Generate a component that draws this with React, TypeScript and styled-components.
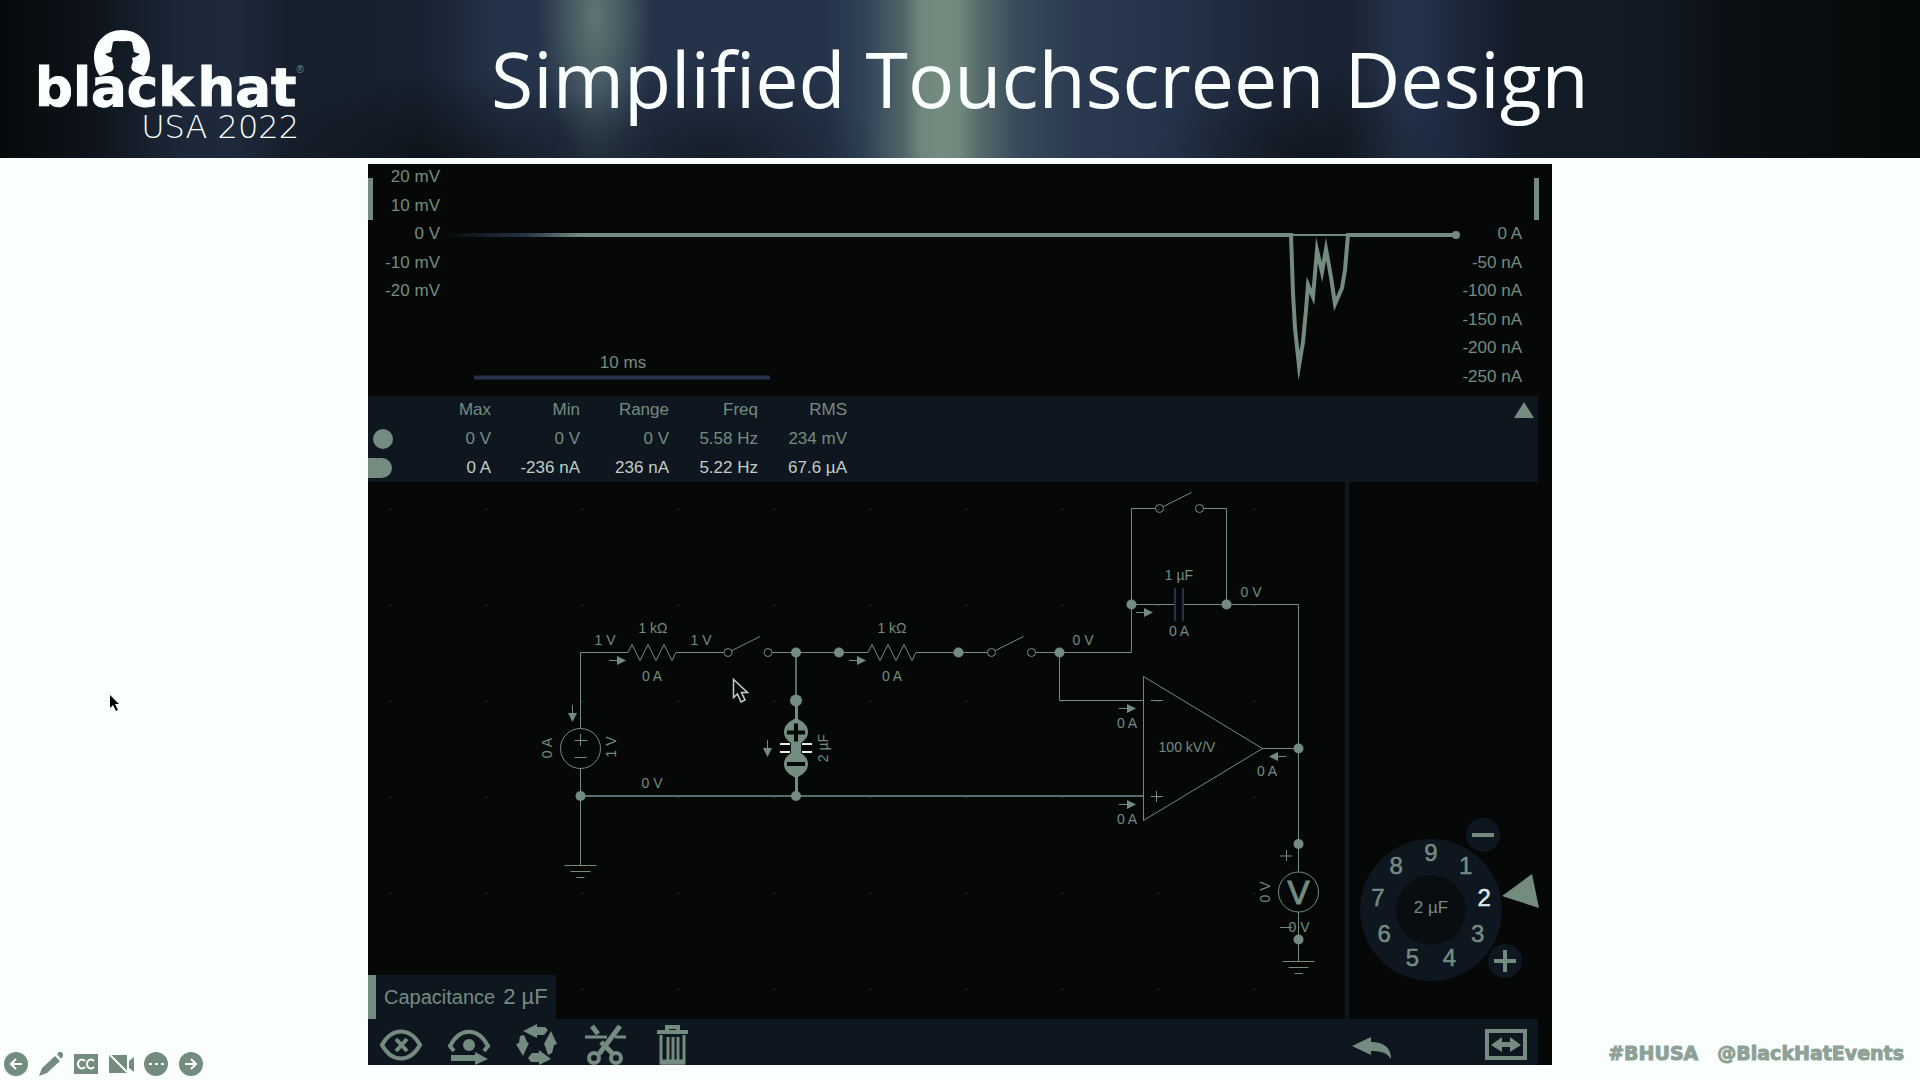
import React from "react";
import styled, { createGlobalStyle } from "styled-components";

const color = {
  paper: "#fafffd",
  ink: "#050807",
  band: "#0e161f",
  navy: "#25334a",
  sage: "#748c80",
  bright: "#c0cec6",
};

const Global = createGlobalStyle`
  *, *::before, *::after { box-sizing: border-box; }
  body { margin: 0; background: ${color.paper}; font-family: "Liberation Sans", Arial, sans-serif; }
  button { border: 0; padding: 0; background: none; color: inherit; font: inherit; cursor: pointer; }
  svg { display: block; }
`;

const Slide = styled.div`
  position: relative;
  min-height: 100vh;
  display: flex;
  flex-direction: column;
  overflow: hidden;
`;

const Header = styled.header`
  display: flex;
  align-items: flex-start;
  gap: 188px;
  height: 158px;
  padding: 30px 35px 0;
  color: ${color.paper};
  background:
    radial-gradient(ellipse 9% 60% at 37% 100%, rgba(5, 8, 7, 0.5), transparent),
    radial-gradient(ellipse 10% 60% at 24% 105%, rgba(5, 8, 7, 0.6), transparent),
    radial-gradient(ellipse 8% 55% at 68% 100%, rgba(5, 8, 7, 0.45), transparent),
    radial-gradient(ellipse 3% 90% at 31% 10%, rgba(116, 140, 128, 0.7), transparent),
    linear-gradient(90deg,
      #070a0b 0%, #0e141c 5%, #1b2636 9%, #1e2a3c 12%, #161f2c 15%, #172130 22%,
      #25334a 26%, #25334a 29%, #2f4054 31%, #25334a 34%, #25334a 43%, #314257 45%,
      #4f6468 47%, #6f877c 48%, #748c80 49%, #6f877c 50%, #566b6c 51%, #384a5b 53%, #2b3a50 56%, #25334a 61%,
      #1c2739 66%, #182231 70%, #25334a 73%, #22304a 74%, #131b27 79%, #121a25 86%,
      #0b1015 90%, #060908 100%);
`;

const Logo = styled.div`
  flex: none;
  display: flex;
  flex-direction: column;
  width: 268px;
`;

const HatIcon = styled.svg`
  width: 56px;
  height: 46px;
  margin-left: 59px;
`;

const LogoName = styled.div`
  display: flex;
  gap: 4px;
  margin-top: -12px;
  font: 700 53px/48px "DejaVu Sans", sans-serif;
  -webkit-text-stroke: 1px currentColor;
  white-space: nowrap;
`;

const LogoYear = styled.div`
  align-self: flex-end;
  padding-right: 4px;
  font: 200 32px/30px "DejaVu Sans", sans-serif;
  white-space: nowrap;
`;

const Registered = styled.sup`
  width: 0;
  margin-left: -4px;
  font: 400 10px/12px "Liberation Sans", sans-serif;
  -webkit-text-stroke: 0;
  color: ${color.sage};
`;

const Title = styled.h1`
  margin: 0;
  font: 400 77px/98px "Open Sans", sans-serif;
  white-space: nowrap;
`;

const Body = styled.main`
  flex: 1;
  display: grid;
  grid-template-columns: minmax(0, 1fr) minmax(0, 1184px) minmax(0, 1fr);
  padding-top: 6px;
`;

const Side = styled.aside<{ $end?: boolean }>`
  display: flex;
  align-items: flex-end;
  justify-content: ${(p) => (p.$end ? "flex-end" : "flex-start")};
  padding: ${(p) => (p.$end ? "0 16px 15px 0" : "0 0 4px 4px")};
`;

const SlideNav = styled.nav`
  display: flex;
  gap: 11px;
  color: ${color.sage};
  button { width: 24px; height: 24px; }
`;

const Tags = styled.div`
  display: flex;
  gap: 19px;
  font: 700 19px/24px "DejaVu Sans", sans-serif;
  -webkit-text-stroke: 1px currentColor;
  white-space: nowrap;
  a { color: #8da197; text-decoration: none; }
`;

const Panel = styled.section`
  align-self: start;
  background: ${color.ink};
  color: ${color.sage};
`;

const Scope = styled.div`
  display: flex;
  height: 232px;
  padding-right: 13px;
`;

const Marker = styled.span`
  flex: none;
  width: 5px;
  height: 42px;
  margin-top: 14px;
  background: ${color.sage};
`;

const Axis = styled.ul<{ $right?: boolean }>`
  flex: none;
  display: flex;
  flex-direction: column;
  justify-content: space-between;
  width: ${(p) => (p.$right ? "74px" : "67px")};
  height: ${(p) => (p.$right ? "163px" : "134px")};
  margin: ${(p) => (p.$right ? "60px 12px 0 0" : "3px 0 0")};
  padding: 0;
  list-style: none;
  font-size: 17px;
  line-height: 20px;
  text-align: right;
  white-space: nowrap;
`;

const Plot = styled.svg`
  flex: 1;
  min-width: 0;
  height: 232px;
`;

const Measures = styled.div`
  display: flex;
  justify-content: space-between;
  align-items: flex-start;
  margin-right: 14px;
  padding-right: 4px;
  background: ${color.band};
`;

const Table = styled.table`
  border-collapse: collapse;
  table-layout: fixed;
  width: 479px;
  font-size: 17px;
  line-height: 20px;

  th, td { width: 89px; padding: 0; font-weight: 400; text-align: right; white-space: nowrap; }
  th:first-child { width: 34px; }
  thead tr { height: 28px; }
  tbody tr { height: 29px; }
`;

const Row = styled.tr<{ $active?: boolean }>`
  color: ${(p) => (p.$active ? color.bright : color.sage)};
`;

const Swatch = styled.span<{ $pill?: boolean }>`
  display: block;
  width: ${(p) => (p.$pill ? "24px" : "20px")};
  height: 20px;
  margin-left: ${(p) => (p.$pill ? "0" : "5px")};
  border-radius: ${(p) => (p.$pill ? "0 10px 10px 0" : "10px")};
  background: ${color.sage};
`;

const Collapse = styled.button`
  width: 20px;
  height: 26px;
  padding: 6px 0 4px;
`;

const Workspace = styled.div`
  display: grid;
  grid-template-columns: minmax(0, 977px) minmax(0, 207px);
`;

const Canvas = styled.div`
  position: relative;
`;

const Diagram = styled.svg`
  width: 100%;
  height: auto;
  font-size: 14px;
`;

const Property = styled.div`
  position: absolute;
  left: 0;
  bottom: 0;
  display: flex;
  align-items: center;
  gap: 8px;
  height: 44px;
  padding: 0 8px;
  border-left: 8px solid ${color.sage};
  background: ${color.band};
  font-size: 20px;
  white-space: nowrap;
  output { font-size: 22px; }
`;

const DialColumn = styled.div`
  display: flex;
  justify-content: flex-end;
  align-items: flex-end;
  padding: 0 13px 37px 0;
  border-left: 4px solid ${color.band};
`;

const Dial = styled.div`
  position: relative;
  flex: none;
  width: 180px;
  height: 164px;
`;

const DialDigit = styled.button<{ $active?: boolean }>`
  position: absolute;
  width: 24px;
  height: 28px;
  margin: -14px 0 0 -12px;
  font-size: 24px;
  line-height: 28px;
  color: ${(p) => (p.$active ? "#dfe9e4" : color.sage)};
  -webkit-text-stroke: 0.5px currentColor;
`;

const DialValue = styled.output`
  position: absolute;
  left: 38px;
  top: 80px;
  width: 68px;
  font-size: 17px;
  line-height: 20px;
  text-align: center;
`;

const Step = styled.button<{ $plus?: boolean }>`
  position: absolute;
  right: ${(p) => (p.$plus ? "17px" : "39px")};
  top: ${(p) => (p.$plus ? "126px" : "0")};
  width: 34px;
  height: 34px;
  border-radius: 17px;
  background: ${color.band};
`;

const Toolbar = styled.div`
  display: flex;
  justify-content: space-between;
  height: 46px;
  margin-right: 14px;
  padding: 0 8px 0 9px;
  background: ${color.band};
`;

const Tools = styled.div<{ $wide?: boolean }>`
  display: flex;
  gap: ${(p) => (p.$wide ? "87px" : "20px")};
`;

const ToolButton = styled.button`
  width: 48px;
  height: 46px;
`;

const Pointer = styled.svg`
  position: absolute;
  left: 109px;
  top: 694px;
  width: 12px;
  height: 18px;
`;

const stats = [
  { name: "Voltage", cells: ["0 V", "0 V", "0 V", "5.58 Hz", "234 mV"] },
  { name: "Current", cells: ["0 A", "-236 nA", "236 nA", "5.22 Hz", "67.6 µA"] },
];

function Resistor({ x, y }: { x: number; y: number }) {
  return <path d={`M${x} ${y}l4-8 8 16 8-16 8 16 8-16 8 16 4-8`} />;
}

function Switch({ x, y }: { x: number; y: number }) {
  return (
    <g>
      <circle cx={x} cy={y} r="4" />
      <circle cx={x + 40} cy={y} r="4" />
      <path d={`M${x + 4} ${y - 2}l28-14`} />
    </g>
  );
}

function Arrow({ x, y, turn = 0 }: { x: number; y: number; turn?: number }) {
  return (
    <g transform={`translate(${x} ${y}) rotate(${turn})`}>
      <path d="M-17 0h9" />
      <path d="M0 0l-9-4.500v9z" fill={color.sage} stroke="none" />
    </g>
  );
}

function Ground({ x, y }: { x: number; y: number }) {
  return <path d={`M${x - 16} ${y}h32M${x - 10} ${y + 6}h20M${x - 4} ${y + 12}h8`} />;
}

const nodes = [
  [580.5, 796], [796, 652.5], [839, 652.5], [958.5, 652.5], [1059.5, 652.5],
  [1131.5, 604.5], [1226.5, 604.5], [1298.5, 748.5], [1298.5, 844], [1298.5, 939.5], [796, 796],
];

const labels: [string, number, number][] = [
  ["1 V", 605, 645], ["1 kΩ", 653, 633], ["0 A", 652, 681], ["1 V", 701, 645], ["0 V", 652, 788],
  ["1 kΩ", 892, 633], ["0 A", 892, 681], ["0 V", 1083, 645], ["1 µF", 1179, 580], ["0 A", 1179, 636],
  ["0 V", 1251, 597], ["0 A", 1127, 728], ["0 A", 1127, 824], ["0 A", 1267, 776], ["100 kV/V", 1187, 752],
  ["0 V", 1299, 932],
];

const sideLabels: [string, number, number][] = [
  ["0 A", 552, 748], ["1 V", 616, 747], ["2 µF", 828, 748], ["0 V", 1270, 892],
];

const gridDots: [number, number][] = [];
for (let x = 389; x < 1340; x += 96) for (let y = 509; y < 1000; y += 96) gridDots.push([x, y]);

function Circuit() {
  return (
    <Diagram viewBox="368 482 977 537" role="img" aria-label="Circuit diagram">
      <g fill={color.navy}>
        {gridDots.map(([x, y]) => <rect key={`${x}-${y}`} x={x} y={y} width="2" height="1" />)}
      </g>
      <g fill="none" stroke={color.sage} strokeWidth="1">
        <path d="M580.500 728.500V652.500H628M676 652.500h48M772 652.500h96M916 652.500h71.500M1035.500 652.500h96M1131.500 652.500v-144h24M1203.500 508.500h23v96M1131.500 604.500h43.500M1183 604.500h115.500v267M1059.500 652.500v48h84M1262 748.500h36.500M580.500 768.500v97M1298.500 912v50" />
        <path d="M580.500 796H1143" stroke="#576d6d" strokeWidth="2" />
        <path d="M796 652.500v48" stroke="#576d6d" strokeWidth="2" />
        <path d="M1175 588v33M1183 588v33" stroke={color.navy} strokeWidth="2" />
        <path d="M1143.500 676.500v144l119-72z" />
        <path d="M1151 700.500h12M1151 796.500h12M1156.500 791v11M1280 856h12M1286.500 850v11M1280 927.500h12" />
        <circle cx="580.5" cy="748.5" r="20" />
        <path d="M574.500 740.500h13M580.500 734v12M574.500 757.500h12" />
        <circle cx="1298.5" cy="892" r="20" />
        <Resistor x={628} y={652.5} />
        <Resistor x={868} y={652.5} />
        <Switch x={728} y={652.5} />
        <Switch x={991.5} y={652.5} />
        <Switch x={1159.5} y={508.5} />
        <Ground x={580.5} y={865.5} />
        <Ground x={1298.5} y={961.5} />
        <Arrow x={626} y={660.5} />
        <Arrow x={866} y={660.5} />
        <Arrow x={1153} y={612.5} />
        <Arrow x={1136} y={708.5} />
        <Arrow x={1136} y={804.5} />
        <Arrow x={1269} y={756.5} turn={180} />
        <Arrow x={572.5} y={722} turn={90} />
        <Arrow x={767.5} y={757} turn={90} />
      </g>
      <g fill={color.sage}>
        {nodes.map(([x, y]) => <circle key={`${x}-${y}`} cx={x} cy={y} r="5" />)}
        <path d="M795 706h3v91h-3z" />
        <circle cx="796" cy="700.5" r="6" />
        <path d="M796 718c8 4 12 8 12 14 0 5-3 8-7 11v10c4 3 7 6 7 11 0 6-4 10-12 14-8-4-12-8-12-14 0-5 3-8 7-11v-10c-4-3-7-6-7-11 0-6 4-10 12-14z" />
      </g>
      <path d="M787 732.500h18M796 723.500v18M787 764h18" stroke={color.ink} strokeWidth="4" />
      <path d="M780 744h10M802 744h10M780 752h10M802 752h10" stroke="#e5eeea" strokeWidth="2" />
      <g fill={color.sage} textAnchor="middle">
        {labels.map(([t, x, y]) => <text key={`${x}-${y}`} x={x} y={y}>{t}</text>)}
        {sideLabels.map(([t, x, y]) => (
          <text key={`${x}-${y}`} transform={`translate(${x} ${y}) rotate(-90)`}>{t}</text>
        ))}
        <text x="1298.5" y="904" fontSize="33" stroke={color.sage}>V</text>
      </g>
      <path d="M733.500 679.500v18l4-3.500 3.500 8 4-2-3.500-7.500h6z" fill={color.ink} stroke="#c3d0c9" strokeWidth="1.5" />
    </Diagram>
  );
}

function DialControl() {
  return (
    <Dial>
      <svg width="180" height="164" viewBox="0 0 180 164" aria-hidden="true">
        <circle cx="72" cy="92" r="71" fill={color.band} />
        <circle cx="72" cy="92" r="35" fill="#090d10" />
        <path d="M143 78l30-22 7 34z" fill={color.sage} />
      </svg>
      {[1, 2, 3, 4, 5, 6, 7, 8, 9].map((n) => {
        const a = (n * 40 * Math.PI) / 180;
        return (
          <DialDigit
            key={n}
            $active={n === 2}
            style={{ left: 72 + 54 * Math.sin(a), top: 89 - 54 * Math.cos(a) }}
          >
            {n}
          </DialDigit>
        );
      })}
      <DialValue>2 µF</DialValue>
      <Step aria-label="Decrease">
        <svg width="34" height="34"><path d="M6 17h22" stroke={color.sage} strokeWidth="4" /></svg>
      </Step>
      <Step $plus aria-label="Increase">
        <svg width="34" height="34"><path d="M6 17h22M17 6v22" stroke={color.sage} strokeWidth="4" /></svg>
      </Step>
    </Dial>
  );
}

function ToolIcon({ children }: { children: React.ReactNode }) {
  return (
    <svg width="48" height="46" viewBox="0 0 48 46" fill="none" stroke={color.sage} strokeWidth="4">
      {children}
    </svg>
  );
}

export default function App() {
  return (
    <Slide>
      <Global />
      <Header>
        <Logo>
          <HatIcon viewBox="0 0 56 46" aria-hidden="true">
            <path
              fill={color.paper}
              fillRule="evenodd"
              d="M28 0C12 0 0 12 0 27c0 7 2 14 6 19l12-5c2-2 2-4 1-7-1-3-1-5 0-6-3-1-6-2-8-4l6-2 2-10c3-2 5 0 9-1 4 1 6-1 10 1l2 10 6 2c-2 2-5 3-8 4 1 2 1 4 0 6-1 3-1 5 1 7l11 5c4-5 6-12 6-19C56 12 44 0 28 0z"
            />
          </HatIcon>
          <LogoName><span>black</span><span>hat</span><Registered>®</Registered></LogoName>
          <LogoYear>USA 2022</LogoYear>
        </Logo>
        <Title>Simplified Touchscreen Design</Title>
      </Header>
      <Body>
        <Side>
          <SlideNav aria-label="Slide controls">
            <button aria-label="Previous">
              <svg width="24" height="24"><circle cx="12" cy="12" r="12" fill={color.sage} /><path d="M18 12H7M12 7l-5 5 5 5" fill="none" stroke="#fff" strokeWidth="2" /></svg>
            </button>
            <button aria-label="Pen">
              <svg width="24" height="24" fill={color.sage}><path d="M0 24l3-8L16 4l5 5L8 21zM18 2l2-2c2-1 5 2 4 4l-2 3z" /></svg>
            </button>
            <button aria-label="Captions">
              <svg width="24" height="24"><path d="M0 2h24v20H0z" fill={color.sage} /><path d="M11 9c-3-3-7-1-7 3s4 6 7 3M20 9c-3-3-7-1-7 3s4 6 7 3" fill="none" stroke="#fff" strokeWidth="2" /></svg>
            </button>
            <button aria-label="Camera off">
              <svg width="26" height="24"><path d="M0 3h18v18H0zM20 9l5-4v15l-5-4z" fill={color.sage} /><path d="M1 3l17 17" stroke="#fff" strokeWidth="2" /></svg>
            </button>
            <button aria-label="More">
              <svg width="24" height="24"><circle cx="12" cy="12" r="12" fill={color.sage} /><path d="M5 11h3v2H5zM11 11h3v2h-3zM17 11h3v2h-3z" fill="#fff" /></svg>
            </button>
            <button aria-label="Next">
              <svg width="24" height="24"><circle cx="12" cy="12" r="12" fill={color.sage} /><path d="M6 12h11M12 7l5 5-5 5" fill="none" stroke="#fff" strokeWidth="2" /></svg>
            </button>
          </SlideNav>
        </Side>
        <Panel>
          <Scope>
            <Marker />
            <Axis>
              {["20 mV", "10 mV", "0 V", "-10 mV", "-20 mV"].map((t) => <li key={t}>{t}</li>)}
            </Axis>
            <Plot viewBox="440 164 1008 232" preserveAspectRatio="xMinYMin" overflow="visible" role="img" aria-label="Voltage and current over time">
              <defs>
                <linearGradient id="fade" gradientUnits="userSpaceOnUse" x1="444" y1="0" x2="580" y2="0">
                  <stop offset="0" stopColor={color.ink} />
                  <stop offset="0.6" stopColor={color.navy} />
                  <stop offset="1" stopColor={color.sage} />
                </linearGradient>
              </defs>
              <rect x="444" y="233" width="136" height="4" fill="url(#fade)" />
              <path d="M1290 235h59" stroke={color.sage} strokeWidth="2" />
              <path
                d="M579 235H1291L1293 293 1295 328 1299 366 1303 342 1306 310 1308 285 1313 297 1317 250 1322 272 1326 249 1331 277 1335 304 1342 288 1345 270 1348 235H1456"
                fill="none"
                stroke={color.sage}
                strokeWidth="4"
                strokeMiterlimit="12"
              />
              <circle cx="1456" cy="235" r="4" fill={color.sage} />
              <text x="623" y="368" fontSize="17" textAnchor="middle" fill={color.sage}>10 ms</text>
              <path d="M474 377.500H770" stroke={color.navy} strokeWidth="4" />
            </Plot>
            <Axis $right>
              {["0 A", "-50 nA", "-100 nA", "-150 nA", "-200 nA", "-250 nA"].map((t) => <li key={t}>{t}</li>)}
            </Axis>
            <Marker />
          </Scope>
          <Measures>
            <Table>
              <thead>
                <tr>
                  <th aria-label="Signal" />
                  {["Max", "Min", "Range", "Freq", "RMS"].map((h) => <th key={h} scope="col">{h}</th>)}
                </tr>
              </thead>
              <tbody>
                {stats.map((s, i) => (
                  <Row key={s.name} $active={i === 1}>
                    <th scope="row" aria-label={s.name}><Swatch $pill={i === 1} /></th>
                    {s.cells.map((c, j) => <td key={j}>{c}</td>)}
                  </Row>
                ))}
              </tbody>
            </Table>
            <Collapse aria-label="Collapse">
              <svg width="20" height="16"><path d="M10 0l10 16H0z" fill={color.sage} /></svg>
            </Collapse>
          </Measures>
          <Workspace>
            <Canvas>
              <Circuit />
              <Property><span>Capacitance</span><output>2 µF</output></Property>
            </Canvas>
            <DialColumn><DialControl /></DialColumn>
          </Workspace>
          <Toolbar>
            <Tools>
              <ToolButton aria-label="Hide">
                <ToolIcon>
                  <path d="M5 26C15 8 33 8 43 26 33 44 15 44 5 26z" />
                  <path d="M19 20l11 12M30 20L19 32" />
                </ToolIcon>
              </ToolButton>
              <ToolButton aria-label="Watch">
                <ToolIcon>
                  <path d="M9 32l-4-5C15 8 33 8 43 27l-4 5" />
                  <circle cx="24" cy="26" r="6" fill={color.sage} stroke="none" />
                  <path d="M6 36h24v-3l13 7-13 6v-4H6z" fill={color.sage} stroke="none" />
                </ToolIcon>
              </ToolButton>
              <ToolButton aria-label="Rotate">
                <ToolIcon>
                  <g fill={color.sage} stroke="none">
                    <path d="M10 12l14-7v3h8l3 3-4 5h-7v3z" />
                    <path d="M38 12l6 13-3 1-2 8-4 2-3-9-1-2z" />
                    <path d="M38 40l-12 6v-3h-8l-3-4 4-5h7v-3z" />
                    <path d="M10 37L3 25l3-1 1-7 4-1 3 7 2 1z" />
                  </g>
                </ToolIcon>
              </ToolButton>
              <ToolButton aria-label="Cut">
                <ToolIcon>
                  <path d="M4 18h22M34 18h11" strokeWidth="3" />
                  <path d="M39 7L18 35M11 7l6 8M20 23l12 12" strokeWidth="5" />
                  <circle cx="13" cy="39" r="5" />
                  <circle cx="35" cy="39" r="5" />
                </ToolIcon>
              </ToolButton>
              <ToolButton aria-label="Delete">
                <ToolIcon>
                  <path d="M8 13h31M18 12V8h11v4" />
                  <path d="M12 16v28h23V16M19 18v23M24 18v23M29 18v23" strokeWidth="3" />
                  <path d="M11 43h25" strokeWidth="5" />
                </ToolIcon>
              </ToolButton>
            </Tools>
            <Tools $wide>
              <ToolButton aria-label="Undo">
                <ToolIcon>
                  <path d="M5 27l19-9v5c12 0 20 5 20 17-4-6-9-8-20-8v4z" fill={color.sage} stroke="none" />
                </ToolIcon>
              </ToolButton>
              <ToolButton aria-label="Fit to view">
                <ToolIcon>
                  <path d="M5 12h38v27H5z" />
                  <path d="M9 26l11-8v5h8v-5l11 8-11 7v-5h-8v5z" fill={color.sage} stroke="none" />
                </ToolIcon>
              </ToolButton>
            </Tools>
          </Toolbar>
        </Panel>
        <Side $end>
          <Tags><a href="#bhusa">#BHUSA</a><a href="#events">@BlackHatEvents</a></Tags>
        </Side>
      </Body>
      <Pointer viewBox="0 0 12 18" aria-hidden="true">
        <path d="M1 1v13l3-3 3 6 2-1-3-6h4z" fill="#05060c" />
      </Pointer>
    </Slide>
  );
}
